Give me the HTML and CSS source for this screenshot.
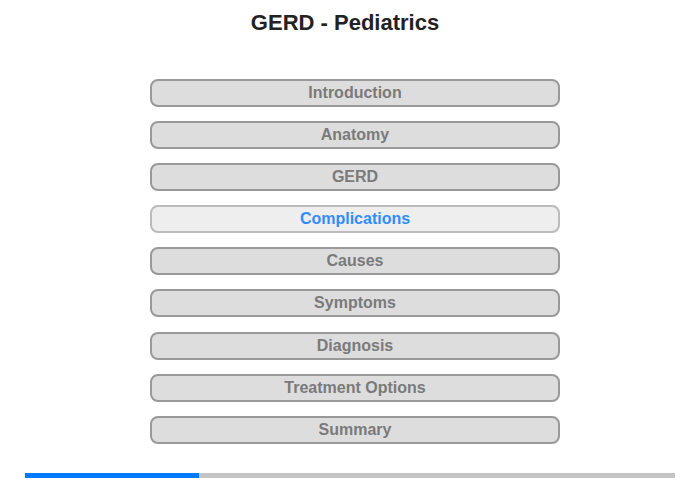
FILE: index.html
```html
<!DOCTYPE html>
<html lang="en">

<head>
    <meta charset="UTF-8">
    <meta name="viewport" content="width=device-width, initial-scale=1.0">
    <title>GERD - Pediatrics</title>
    <link rel="stylesheet" href="styles.css">
</head>

<body>
    <div class="page">
        <h1 class="title">GERD - Pediatrics</h1>
        <div class="menu">
            <button class="menu-btn">Introduction</button>
            <button class="menu-btn">Anatomy</button>
            <button class="menu-btn">GERD</button>
            <button class="menu-btn active">Complications</button>
            <button class="menu-btn">Causes</button>
            <button class="menu-btn">Symptoms</button>
            <button class="menu-btn">Diagnosis</button>
            <button class="menu-btn">Treatment Options</button>
            <button class="menu-btn">Summary</button>
        </div>
        <div class="progress">
            <div class="progress-fill" style="width: 174px;"></div>
        </div>
    </div>
</body>

</html>
```

FILE: styles.css
```css
body {
    font-family: "Liberation Sans", Arial, sans-serif;
    background-color: #fff;
    margin: 0;
    padding: 0;
}

.page {
    width: 700px;
    height: 480px;
    display: flex;
    flex-direction: column;
}

.title {
    margin: 0;
    padding: 10px 10px 0 0;
    font-size: 22px;
    line-height: 26px;
    font-weight: bold;
    text-align: center;
    color: #222;
}

.menu {
    display: flex;
    flex-direction: column;
    gap: 14.1px;
    width: 410px;
    margin: 43px 0 0 150px;
}

.menu-btn {
    display: block;
    width: 100%;
    height: 28px;
    padding: 0;
    background-color: #ddd;
    border: 2px solid #999;
    border-radius: 8px;
    font-family: inherit;
    font-size: 16px;
    line-height: 24px;
    font-weight: bold;
    color: #7a7a7a;
    cursor: pointer;
}

.menu-btn.active {
    background-color: #eee;
    border-color: #bbb;
    color: #318cff;
}

.progress {
    display: flex;
    width: 650px;
    height: 5px;
    margin: 29px 0 0 25px;
    background-color: #c4c4c4;
}

.progress-fill {
    height: 100%;
    background-color: #007bff;
}
```
